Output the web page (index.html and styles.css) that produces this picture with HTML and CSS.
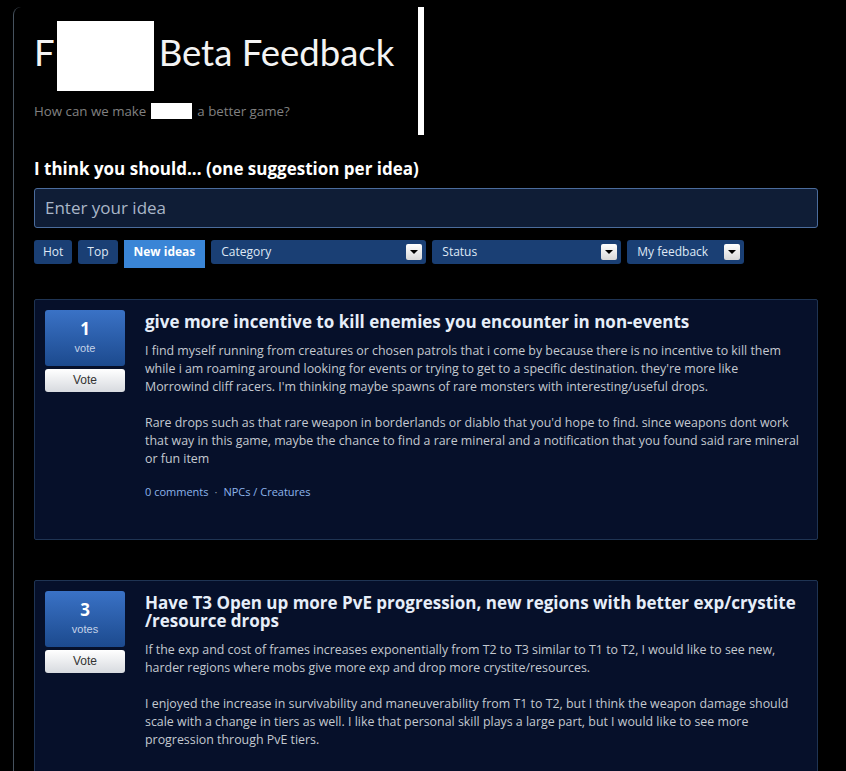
FILE: index.html
```html
<!DOCTYPE html>
<html>
<head>
<meta charset="utf-8">
<link rel="stylesheet" href="styles.css">
</head>
<body>
<div class="page">
  <div class="header">
    <h1 class="title"><span class="t-f">F</span><span class="mask mask-big"></span><span class="t-rest">Beta Feedback</span></h1>
    <p class="subtitle">How can we make <span class="mask mask-small"></span> a better game?</p>
  </div>
  <h2 class="prompt">I think you should... (one suggestion per idea)</h2>
  <div class="idea-input">Enter your idea</div>
  <div class="filters">
    <span class="tab">Hot</span>
    <span class="tab">Top</span>
    <span class="tab tab-active">New ideas</span>
    <span class="select sel-cat">Category<span class="arrow"></span></span>
    <span class="select sel-status">Status<span class="arrow"></span></span>
    <span class="select sel-mine">My feedback<span class="arrow"></span></span>
  </div>

  <div class="card">
    <div class="voter">
      <div class="count"><span class="num">1</span><span class="lbl">vote</span></div>
      <div class="vote-btn">Vote</div>
    </div>
    <div class="content">
      <h3 class="idea-title">give more incentive to kill enemies you encounter in non-events</h3>
      <p class="idea-text">I find myself running from creatures or chosen patrols that i come by because there is no incentive to kill them while i am roaming around looking for events or trying to get to a specific destination. they're more like Morrowind cliff racers. I'm thinking maybe spawns of rare monsters with interesting/useful drops.</p>
      <p class="idea-text">Rare drops such as that rare weapon in borderlands or diablo that you'd hope to find. since weapons dont work that way in this game, maybe the chance to find a rare mineral and a notification that you found said rare mineral or fun item</p>
      <p class="meta"><span class="link">0 comments</span><span class="dot">·</span><span class="link">NPCs / Creatures</span></p>
    </div>
  </div>

  <div class="card card-2">
    <div class="voter">
      <div class="count"><span class="num">3</span><span class="lbl">votes</span></div>
      <div class="vote-btn">Vote</div>
    </div>
    <div class="content">
      <h3 class="idea-title">Have T3 Open up more PvE progression, new regions with better exp/crystite /resource drops</h3>
      <p class="idea-text">If the exp and cost of frames increases exponentially from T2 to T3 similar to T1 to T2, I would like to see new, harder regions where mobs give more exp and drop more crystite/resources.</p>
      <p class="idea-text">I enjoyed the increase in survivability and maneuverability from T1 to T2, but I think the weapon damage should scale with a change in tiers as well. I like that personal skill plays a large part, but I would like to see more progression through PvE tiers.</p>
    </div>
  </div>
</div>
</body>
</html>
```
FILE: styles.css
```css
html, body {
  margin: 0;
  padding: 0;
  background: #000;
  height: 100%;
  overflow: hidden;
}
body {
  font-family: "Open Sans", Lato, sans-serif;
  color: #fff;
}
.page {
  margin-left: 13px;
  margin-top: 2px;
  border-left: 1px solid #46525e;
  border-top-left-radius: 8px;
  padding-left: 20px;
  width: 784px;
  min-height: 800px;
}
.header {
  width: 390px;
  border-right: 6px solid #fff;
  margin-top: 7px;
  height: 128px;
  box-sizing: border-box;
  padding-top: 14px;
}
.title {
  margin: 0;
  font-family: Lato, sans-serif;
  font-weight: 400;
  font-size: 36.5px;
  line-height: 70px;
  height: 70px;
  display: flex;
  align-items: flex-start;
  color: #f4f4f4;
}
.t-f { margin-right: 2px; line-height: 62px; }
.mask { display: inline-block; background: #fff; }
.mask-big { width: 97px; height: 70px; margin-right: 5px; }
.t-rest { line-height: 62px; }
.subtitle {
  margin: 12px 0 0;
  font-size: 13.3px;
  color: #808080;
  line-height: 16px;
  display: flex;
  align-items: center;
}
.mask-small { width: 41px; height: 16px; margin: 0 5px; }
.prompt {
  margin: 23px 0 0 0;
  font-size: 17px;
  font-weight: 700;
  line-height: 22px;
  color: #fff;
}
.idea-input {
  margin-top: 8px;
  height: 40px;
  box-sizing: border-box;
  border: 1px solid #4b6c9c;
  border-radius: 3px;
  background: #0f1d36;
  color: #a9b6c8;
  font-size: 17px;
  line-height: 38px;
  padding-left: 10px;
}
.filters {
  margin-top: 12px;
  display: flex;
  gap: 6px;
  align-items: flex-start;
}
.tab, .select {
  height: 24px;
  line-height: 24px;
  font-size: 12px;
  background: #1a3f74;
  color: #dfe8f4;
  border-radius: 3px;
  box-sizing: border-box;
  padding: 0 10px;
}
.tab { padding: 0 9px; }
.tab-active {
  background: #3a85d6;
  font-weight: 700;
  height: 28px;
  border-radius: 0;
  color: #fff;
  line-height: 24px;
  padding: 0 10px;
}
.select {
  display: flex;
  justify-content: space-between;
  align-items: center;
  padding-right: 4px;
}
.sel-cat { width: 215px; }
.sel-status { width: 189px; }
.sel-mine { width: 117px; }
.arrow {
  width: 16px;
  height: 16px;
  background: linear-gradient(#ffffff, #d8d8d8);
  border-radius: 2px;
  position: relative;
}
.arrow::after {
  content: "";
  position: absolute;
  left: 4px;
  top: 6px;
  border-left: 4px solid transparent;
  border-right: 4px solid transparent;
  border-top: 4px solid #000;
}
.card {
  margin-top: 31px;
  border: 1px solid #1f3453;
  border-radius: 2px;
  background: #06102a;
  display: flex;
  padding: 10px 10px 0;
  height: 241px;
  box-sizing: border-box;
}
.card-2 { margin-top: 40px; height: 240px; }
.voter {
  width: 80px;
  flex: none;
  margin-right: 20px;
}
.count {
  height: 56px;
  border-radius: 3px;
  background: linear-gradient(#3a72c6, #1c4a8e);
  display: flex;
  flex-direction: column;
  align-items: center;
  padding-top: 10px;
  box-sizing: border-box;
}
.num {
  font-weight: 700;
  font-size: 17px;
  line-height: 18px;
}
.lbl {
  font-family: "Liberation Sans", Arial, sans-serif;
  font-size: 11px;
  color: #c5d3e8;
  margin-top: 4px;
}
.vote-btn {
  margin-top: 3px;
  height: 23px;
  border-radius: 3px;
  background: linear-gradient(#ffffff, #d7dadf);
  color: #333;
  font-family: "Liberation Sans", Arial, sans-serif;
  font-size: 12px;
  line-height: 23px;
  text-align: center;
}
.content { flex: 1; padding-right: 4px; }
.idea-title {
  margin: 3px 0 0;
  font-size: 17px;
  font-weight: 700;
  line-height: 18px;
  color: #e6eef9;
}
.idea-text {
  margin: 11px 0 0;
  font-size: 12.4px;
  line-height: 18px;
  color: #c4c9d0;
}
.idea-text + .idea-text { margin-top: 18px; }
.meta {
  margin: 17px 0 0;
  font-size: 11px;
  line-height: 14px;
}
.link { color: #8db4ea; }
.dot { color: #8a96a8; margin: 0 6px; }
```
